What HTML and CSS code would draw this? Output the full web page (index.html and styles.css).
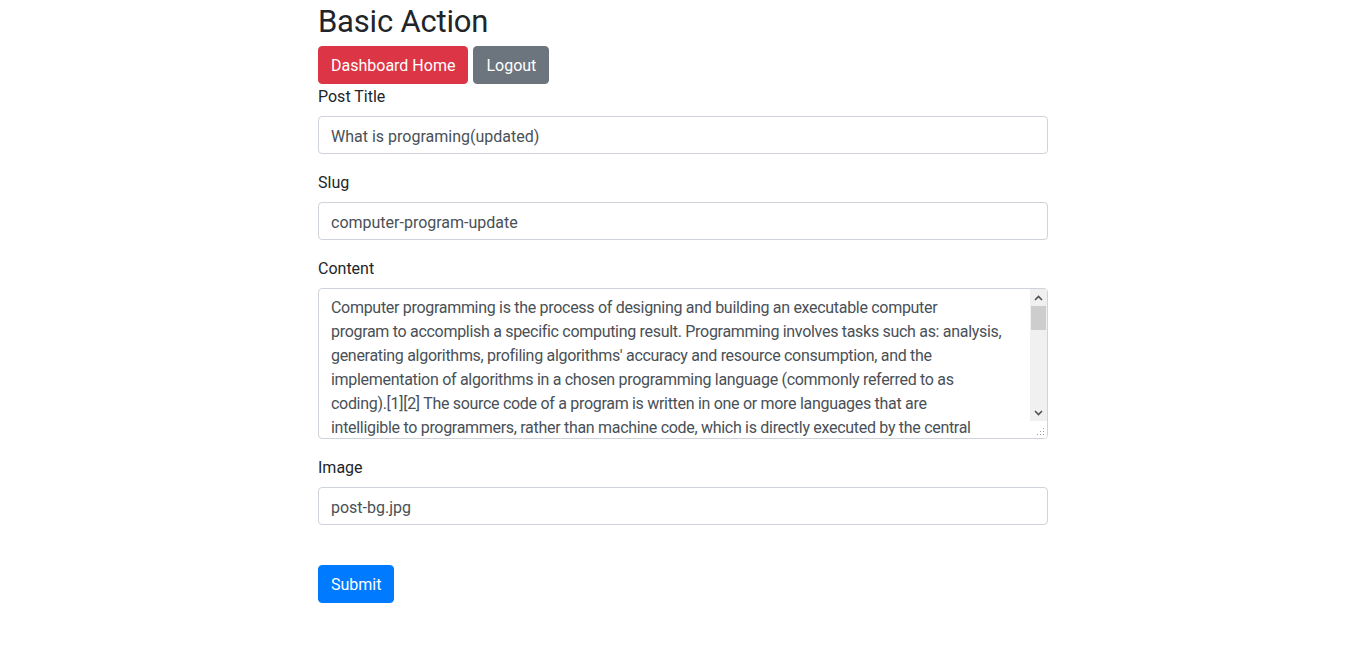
FILE: index.html
```html
<!DOCTYPE html>
<html lang="en">
<head>
<meta charset="utf-8">
<title>Basic Action</title>
<link rel="stylesheet" href="styles.css">
</head>
<body>
<div class="main">
  <h2 class="title">Basic Action</h2>
  <div class="actions">
    <a class="btn btn-danger" href="#">Dashboard Home</a>
    <a class="btn btn-secondary" href="#">Logout</a>
  </div>
  <form class="form">
    <div class="form-group">
      <label class="label">Post Title</label>
      <input class="form-control" type="text" value="What is programing(updated)">
    </div>
    <div class="form-group">
      <label class="label">Slug</label>
      <input class="form-control" type="text" value="computer-program-update">
    </div>
    <div class="form-group">
      <label class="label">Content</label>
      <div class="textarea-wrap">
        <textarea class="form-control textarea">Computer programming is the process of designing and building an executable computer
program to accomplish a specific computing result. Programming involves tasks such as: analysis,
generating algorithms, profiling algorithms' accuracy and resource consumption, and the
implementation of algorithms in a chosen programming language (commonly referred to as
coding).[1][2] The source code of a program is written in one or more languages that are
intelligible to programmers, rather than machine code, which is directly executed by the central processing unit. The purpose of programming is to find a sequence of instructions that will automate the performance of a task (which can be as complex as an operating system) on a computer, often for solving a given problem. The process of programming thus often requires expertise in several different subjects, including knowledge of the application domain, specialized algorithms, and formal logic.

Tasks accompanying and related to programming include: testing, debugging, source code maintenance, implementation of build systems, and management of derived artifacts, such as the machine code of computer programs. These might be considered part of the programming process, but often the term software development is used for this larger process with the term programming, implementation, or coding reserved for the actual writing of code. Software engineering combines engineering techniques with software development practices. Reverse engineering is the opposite process. A hacker is any skilled computer expert that uses their technical knowledge to overcome a problem, but it can also mean a security hacker in common language.</textarea>
        <div class="scrollbar" aria-hidden="true">
          <div class="sb-btn">
            <svg width="9" height="6" viewBox="0 0 9 6"><path d="M1 5 L4.5 1.5 L8 5" fill="none" stroke="#505050" stroke-width="1.6"/></svg>
          </div>
          <div class="sb-track"><div class="sb-thumb"></div></div>
          <div class="sb-btn">
            <svg width="9" height="6" viewBox="0 0 9 6"><path d="M1 1 L4.5 4.5 L8 1" fill="none" stroke="#505050" stroke-width="1.6"/></svg>
          </div>
          <div class="sb-corner">
            <svg width="17" height="17" viewBox="0 0 17 17">
              <rect x="13" y="7" width="1" height="1" fill="#a0a0a0"/>
              <rect x="10" y="10" width="1" height="1" fill="#a0a0a0"/>
              <rect x="13" y="10" width="1" height="1" fill="#a0a0a0"/>
              <rect x="7" y="13" width="1" height="1" fill="#a0a0a0"/>
              <rect x="10" y="13" width="1" height="1" fill="#a0a0a0"/>
              <rect x="13" y="13" width="1" height="1" fill="#a0a0a0"/>
            </svg>
          </div>
        </div>
      </div>
    </div>
    <div class="form-group">
      <label class="label">Image</label>
      <input class="form-control" type="text" value="post-bg.jpg">
    </div>
    <div class="submit-row">
      <button class="btn btn-primary" type="submit">Submit</button>
    </div>
  </form>
</div>
</body>
</html>
```
FILE: styles.css
```css
html, body {
  margin: 0;
  padding: 0;
  background: #fff;
}
body {
  font-family: Roboto, "Liberation Sans", sans-serif;
  font-size: 16px;
  line-height: 1.5;
  color: #212529;
}
.main {
  width: 730px;
  margin: 0 auto;
}
.title {
  margin: 0 0 8px;
  padding-top: 6px;
  font-size: 31px;
  font-weight: 400;
  line-height: 32.4px;
  letter-spacing: -0.2px;
  color: #212529;
}
.actions {
  display: flex;
  gap: 5px;
}
.btn {
  display: inline-block;
  box-sizing: border-box;
  height: 38px;
  padding: 7px 12px 5px;
  font-family: inherit;
  font-size: 16px;
  line-height: 24px;
  font-weight: 400;
  color: #fff;
  text-decoration: none;
  border: 1px solid transparent;
  border-radius: 4px;
  cursor: pointer;
}
.btn-danger {
  background: #dc3545;
  border-color: #dc3545;
}
.btn-secondary {
  background: #6c757d;
  border-color: #6c757d;
}
.btn-primary {
  background: #007bff;
  border-color: #007bff;
}
.form {
  margin: 0;
}
.form-group {
  margin-bottom: 16px;
}
.label {
  display: inline-block;
  padding-top: 1px;
  line-height: 23px;
  margin-bottom: 8px;
}
.form-control {
  display: block;
  box-sizing: border-box;
  width: 100%;
  height: 38px;
  margin: 0;
  padding: 7px 12px 5px;
  font-family: inherit;
  font-size: 16px;
  line-height: 24px;
  color: #495057;
  background: #fff;
  border: 1px solid #ced4da;
  border-radius: 4px;
  outline: none;
}
.textarea-wrap {
  position: relative;
}
.textarea {
  height: 151px;
  padding-right: 29px;
  letter-spacing: -0.3px;
  resize: none;
  overflow: hidden;
}
.scrollbar {
  position: absolute;
  top: 1px;
  right: 1px;
  bottom: 1px;
  width: 17px;
  display: flex;
  flex-direction: column;
}
.sb-btn {
  height: 17px;
  flex: none;
  display: flex;
  align-items: center;
  justify-content: center;
  background: #f0f0f0;
}
.sb-track {
  flex: 1;
  background: #f0f0f0;
}
.sb-thumb {
  height: 24px;
  margin: 0 1px;
  background: #cdcdcd;
}
.sb-corner {
  height: 17px;
  flex: none;
  background: #fff;
  border-bottom-right-radius: 3px;
}
.sb-corner svg {
  display: block;
}
.submit-row {
  padding-top: 24px;
}
```
